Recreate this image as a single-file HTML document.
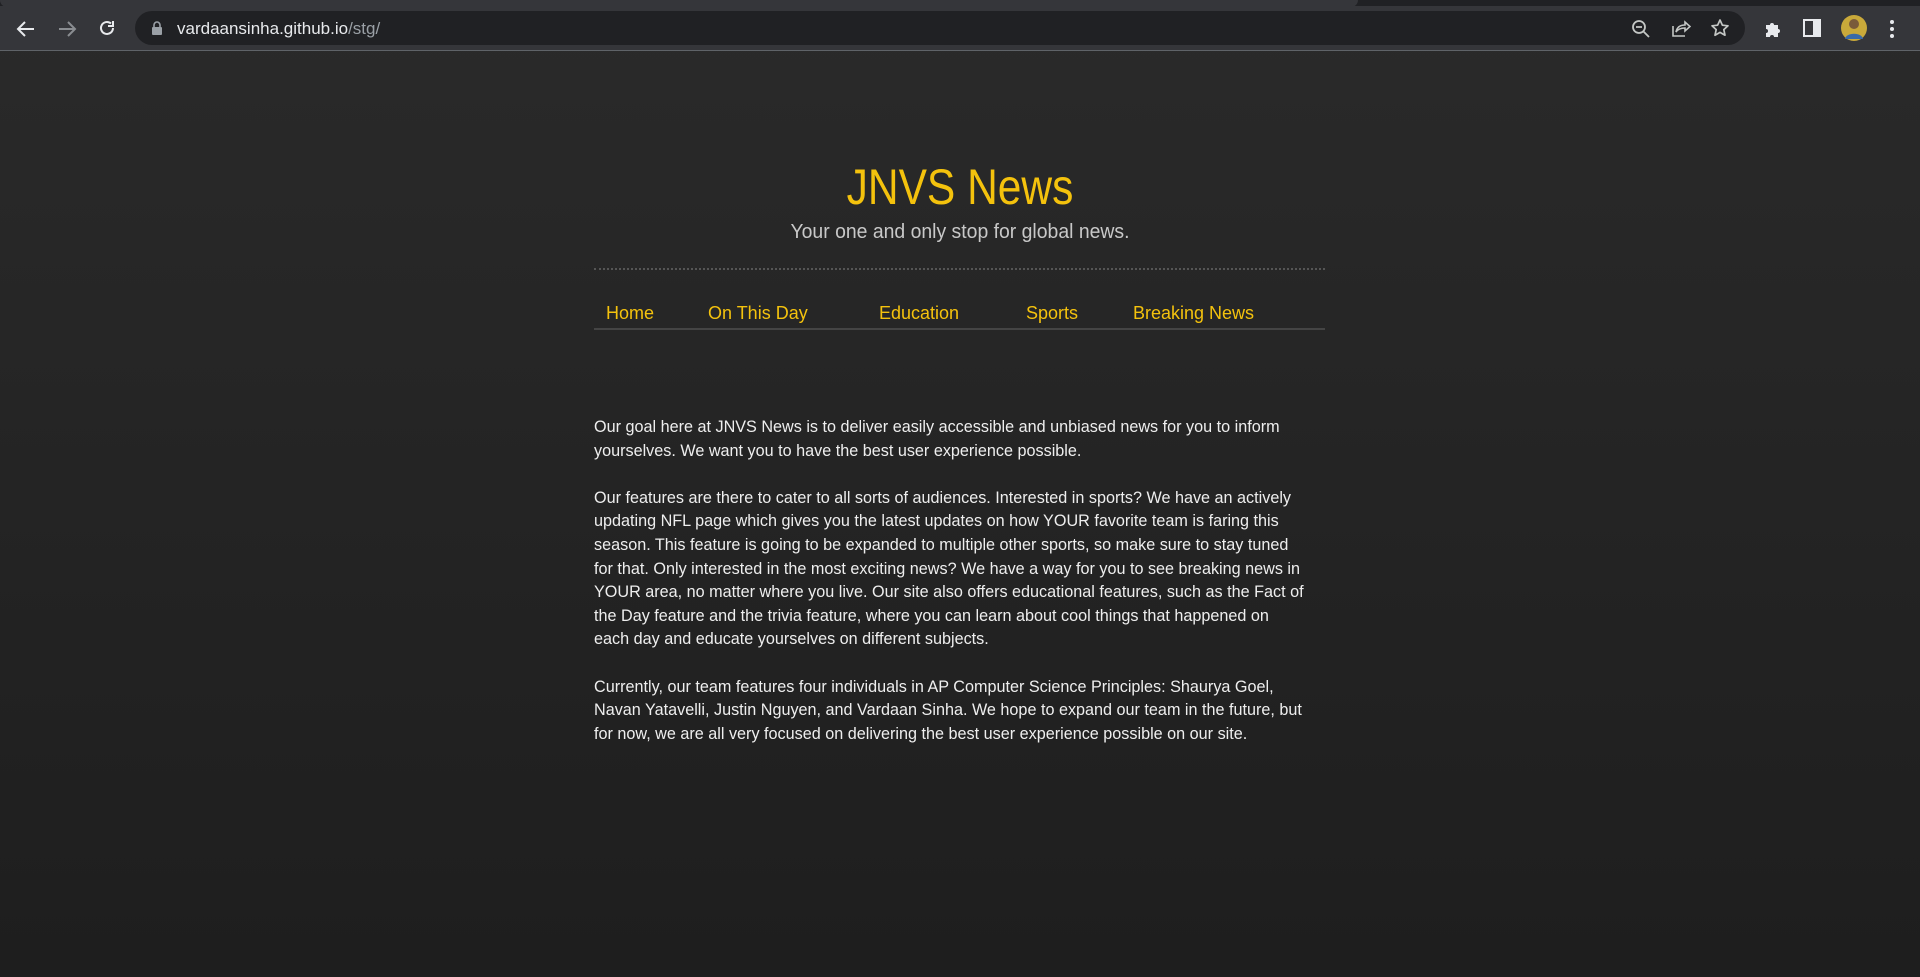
<!DOCTYPE html>
<html><head><meta charset="utf-8"><style>
*{margin:0;padding:0;box-sizing:border-box}
html,body{width:1920px;height:977px;overflow:hidden}
body{background:linear-gradient(#2a2a2a,#1e1e1e);font-family:"Liberation Sans",sans-serif;position:relative}
.tabs{position:absolute;left:0;top:0;width:1920px;height:7px;background:#202124}
.tabs .t{position:absolute;left:0;top:0;width:1358px;height:7px;background:#35363a;border-radius:0 0 8px 8px}
.tb{position:absolute;left:0;top:6px;width:1920px;height:45px;background:#35363a;border-bottom:1px solid #5f6368}
.url{position:absolute;left:135px;top:5px;width:1610px;height:34px;border-radius:17px;background:#202124}
.url span{position:absolute;left:42px;top:8px;font-size:17px;color:#e8eaed}
.url span i{font-style:normal;color:#9aa0a6}
svg{position:absolute}
.c{position:absolute;left:594px;width:731px}
h1{position:absolute;top:157px;left:0;width:1920px;text-align:center;font-weight:normal;font-size:50px;color:#f4c20d;line-height:60px;transform:scaleX(0.85)}
.sub{position:absolute;top:219px;left:0;width:1920px;text-align:center;font-size:20px;color:#c8c8c8;line-height:26px;transform:scaleX(0.97)}
.dots{top:268px;height:3px;border-top:2px dotted #555}
.nav{top:301px;height:29px;border-bottom:2px solid #444;color:#f4c20d;font-size:18px}
.nav span{position:absolute;top:2px}
.p{top:416px;color:#eeeeee;font-size:16.2px;line-height:23.6px;white-space:nowrap}
.p div{height:23.6px}
.gap{height:23.6px}
</style></head><body>
<div class="tabs"><div class="t"></div></div>
<div class="tb">
<svg style="left:16px;top:14px" width="20" height="18" viewBox="0 0 20 18"><path d="M18 9H3M9 2L2 9l7 7" stroke="#e8eaed" stroke-width="2" fill="none"/></svg>
<svg style="left:57px;top:14px" width="20" height="18" viewBox="0 0 20 18"><path d="M2 9h15M11 2l7 7-7 7" stroke="#8a8d91" stroke-width="2" fill="none"/></svg>
<svg style="left:97px;top:12px" width="20" height="20" viewBox="0 0 20 20"><path d="M16 10a6 6 0 1 1-2-4.5M16 3v5h-5" stroke="#e8eaed" stroke-width="2" fill="none"/></svg>
<div class="url">
<svg style="left:17px;top:10px" width="10" height="14" viewBox="0 0 10 14"><rect x="0" y="6" width="10" height="8" rx="1" fill="#9aa0a6"/><path d="M2 6V4a3 3 0 0 1 6 0v2" stroke="#9aa0a6" stroke-width="1.6" fill="none"/></svg>
<span>vardaansinha.github.io<i>/stg/</i></span>
<svg style="left:1496px;top:8px" width="20" height="20" viewBox="0 0 20 20"><circle cx="8" cy="8" r="6" stroke="#c4c7c5" stroke-width="1.8" fill="none"/><path d="M5 8h6M12.5 12.5L18 18" stroke="#c4c7c5" stroke-width="1.8"/></svg>
<svg style="left:1536px;top:7px" width="20" height="20" viewBox="0 0 20 20"><path d="M2 8v10h12M5 14c1-5 4-7 9-7V4l5 4.5-5 4.5V10c-4 0-7 1-9 4z" stroke="#c4c7c5" stroke-width="1.6" fill="none"/></svg>
<svg style="left:1575px;top:7px" width="20" height="20" viewBox="0 0 20 20"><path d="M10 2l2.4 5.2 5.6.6-4.2 3.8 1.2 5.6L10 14.4 5 17.2l1.2-5.6L2 7.8l5.6-.6z" stroke="#c4c7c5" stroke-width="1.7" fill="none" stroke-linejoin="round"/></svg>
</div>
<svg style="left:1763px;top:13px" width="20" height="20" viewBox="0 0 20 20"><path d="M3 6h4a2 2 0 1 1 4 0h4v4a2 2 0 1 1 0 4v4H11a2 2 0 1 0-4 0H3v-4a2 2 0 1 0 0-4z" fill="#e8eaed"/></svg>
<svg style="left:1803px;top:13px" width="18" height="18" viewBox="0 0 18 18"><rect x="1" y="1" width="16" height="16" fill="none" stroke="#e8eaed" stroke-width="2"/><rect x="10" y="1" width="7" height="16" fill="#e8eaed"/></svg>
<svg style="left:1840px;top:8px" width="28" height="28" viewBox="0 0 28 28"><circle cx="14" cy="14" r="13" fill="#c9a93a"/><circle cx="14" cy="10" r="5" fill="#7a5a3a"/><path d="M5 25c1-7 17-7 18 0" fill="#3a6aa8"/></svg>
<svg style="left:1889px;top:13px" width="6" height="20" viewBox="0 0 6 20"><circle cx="3" cy="3" r="2" fill="#e8eaed"/><circle cx="3" cy="10" r="2" fill="#e8eaed"/><circle cx="3" cy="17" r="2" fill="#e8eaed"/></svg>
</div>

<h1>JNVS News</h1>
<div class="sub">Your one and only stop for global news.</div>
<div class="c dots"></div>
<div class="c nav">
<span style="left:12px">Home</span>
<span style="left:114px">On This Day</span>
<span style="left:285px">Education</span>
<span style="left:432px">Sports</span>
<span style="left:539px">Breaking News</span>
</div>
<div class="c p">
<div>Our goal here at JNVS News is to deliver easily accessible and unbiased news for you to inform</div>
<div>yourselves. We want you to have the best user experience possible.</div>
<div class="gap"></div>
<div>Our features are there to cater to all sorts of audiences. Interested in sports? We have an actively</div>
<div>updating NFL page which gives you the latest updates on how YOUR favorite team is faring this</div>
<div>season. This feature is going to be expanded to multiple other sports, so make sure to stay tuned</div>
<div>for that. Only interested in the most exciting news? We have a way for you to see breaking news in</div>
<div>YOUR area, no matter where you live. Our site also offers educational features, such as the Fact of</div>
<div>the Day feature and the trivia feature, where you can learn about cool things that happened on</div>
<div>each day and educate yourselves on different subjects.</div>
<div class="gap"></div>
<div>Currently, our team features four individuals in AP Computer Science Principles: Shaurya Goel,</div>
<div>Navan Yatavelli, Justin Nguyen, and Vardaan Sinha. We hope to expand our team in the future, but</div>
<div>for now, we are all very focused on delivering the best user experience possible on our site.</div>
</div>
</body></html>
